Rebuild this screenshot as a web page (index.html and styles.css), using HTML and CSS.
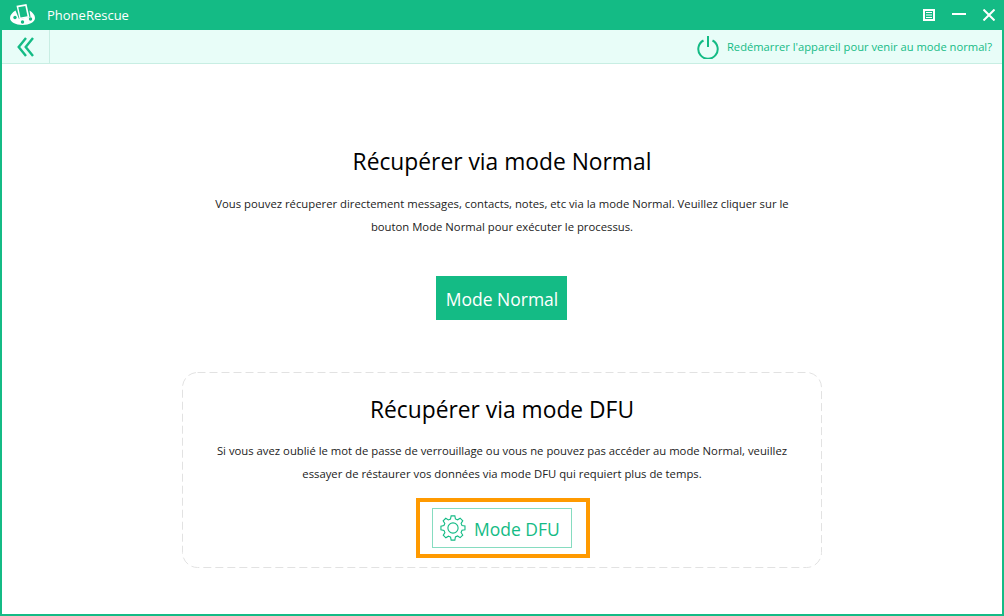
FILE: index.html
```html
<!DOCTYPE html>
<html lang="fr">

<head>
    <meta charset="UTF-8">
    <title>PhoneRescue</title>
    <link rel="stylesheet" href="styles.css">
</head>

<body>
    <div class="window">
        <header class="titlebar">
            <div class="brand">
                <svg class="logo" width="25" height="21" viewBox="0 0 25 21">
                    <path fill="#fff" d="M5.500 6.500C2.300 8.500 0 11 0 14c0 4 5.500 7 12.500 7S25 18 25 14c0-3-2.300-5.500-5.500-7.500l1 6.500-11.500 2z"/>
                    <path fill="#fff" d="M6.500 1.800 16.500 0l3 13.500-10 1.800z"/>
                    <path fill="#14bb85" d="M8.300 3.200 15.300 2l2.200 10.200-7 1.200z"/>
                    <circle cx="5" cy="13.500" r="1.700" fill="#14bb85"/>
                    <circle cx="12.500" cy="18" r="1.700" fill="#14bb85"/>
                    <circle cx="20.500" cy="15" r="1.700" fill="#14bb85"/>
                </svg>
                <span class="app-name">PhoneRescue</span>
            </div>
            <div class="win-controls">
                <svg width="12" height="12" viewBox="0 0 12 12">
                    <path fill="none" stroke="#fff" stroke-width="2" d="M1 1h10v10H1z"/>
                    <path stroke="#fff" d="M3 3.500h6M3 6h6M3 8.500h6"/>
                </svg>
                <svg width="14" height="12" viewBox="0 0 14 12">
                    <path stroke="#fff" stroke-width="2" d="M0 5h14"/>
                </svg>
                <svg width="12" height="12" viewBox="0 0 12 12">
                    <path stroke="#fff" stroke-width="2" d="M.5.500l11 11M11.500.500l-11 11"/>
                </svg>
            </div>
        </header>

        <nav class="toolbar">
            <div class="back">
                <svg width="17" height="20" viewBox="0 0 17 20">
                    <path fill="none" stroke="#14bb85" stroke-width="2.400" d="M9 1 1.700 10 9 19M16 1 8.700 10l7.300 9"/>
                </svg>
            </div>
            <div class="restart">
                <svg width="22" height="24" viewBox="0 0 22 24">
                    <path fill="none" stroke="#14bb85" stroke-width="2" d="M6.500 5.500a9.700 9.700 0 1 0 9 0"/>
                    <path stroke="#14bb85" stroke-width="2" d="M11 1v11"/>
                </svg>
                <span>Redémarrer l'appareil pour venir au mode normal?</span>
            </div>
        </nav>

        <main class="content">
            <section class="normal">
                <h1>Récupérer via mode Normal</h1>
                <p>Vous pouvez récuperer directement messages, contacts, notes, etc via la mode Normal. Veuillez cliquer sur le<br>bouton Mode Normal pour exécuter le processus.</p>
                <button class="btn-normal">Mode Normal</button>
            </section>

            <section class="dfu">
                <h2>Récupérer via mode DFU</h2>
                <p>Si vous avez oublié le mot de passe de verrouillage ou vous ne pouvez pas accéder au mode Normal, veuillez<br>essayer de réstaurer vos données via mode DFU qui requiert plus de temps.</p>
                <div class="highlight">
                    <button class="btn-dfu">
                        <svg width="26" height="26" viewBox="0 0 28 28">
                            <path fill="none" stroke="#14bb85" stroke-width="1.200" d="M12 1h4l.6 3.200 2.300 1 2.800-1.800 2.800 2.800-1.800 2.800 1 2.300 3.200.6v4l-3.200.6-1 2.300 1.800 2.800-2.800 2.800-2.800-1.800-2.300 1L16 27h-4l-.6-3.200-2.300-1-2.800 1.800-2.800-2.800 1.800-2.800-1-2.300L1 16v-4l3.200-.6 1-2.300-1.800-2.800 2.800-2.800 2.800 1.800 2.300-1z"/>
                            <circle cx="14" cy="14" r="5.500" fill="none" stroke="#14bb85" stroke-width="1.200"/>
                        </svg>
                        <span>Mode DFU</span>
                    </button>
                </div>
            </section>
        </main>
    </div>
</body>

</html>
```

FILE: styles.css
```css
* {
    box-sizing: border-box;
}

body {
    margin: 0;
    font-family: "Open Sans", "Noto Sans", sans-serif;
    background-color: #fff;
}

.window {
    width: 1004px;
    height: 616px;
    border: 2px solid #14bb85;
    border-top: none;
    display: flex;
    flex-direction: column;
}

.titlebar {
    height: 30px;
    margin: 0 -2px;
    padding: 0 9px 0 10px;
    background-color: #14bb85;
    display: flex;
    justify-content: space-between;
    align-items: center;
    color: #fff;
}

.brand {
    display: flex;
    align-items: center;
    gap: 12px;
}

.logo {
    display: block;
    margin-top: -2px;
}

.app-name {
    font-size: 13px;
}

.win-controls {
    display: flex;
    align-items: center;
    gap: 17px;
}

.win-controls svg {
    display: block;
}

.toolbar {
    height: 34px;
    background-color: #e8fdf8;
    border-bottom: 1px solid #c8eee3;
    display: flex;
    justify-content: space-between;
    align-items: center;
}

.back {
    width: 48px;
    height: 100%;
    border-right: 1px solid #c8eee3;
    display: flex;
    justify-content: center;
    align-items: center;
}

.restart {
    display: flex;
    align-items: center;
    gap: 8px;
    padding-right: 10px;
    font-size: 11.2px;
    color: #14bb85;
}

.content {
    flex: 1;
    display: flex;
    flex-direction: column;
    align-items: center;
    text-align: center;
}

h1,
h2 {
    margin: 0;
    font-size: 22.8px;
    font-weight: 400;
    line-height: 30px;
    color: #000;
}

p {
    margin: 0;
    font-size: 11.3px;
    line-height: 23px;
    color: #222;
}

.normal {
    padding-top: 83px;
}

.normal p {
    margin-top: 15px;
}

button {
    font-family: inherit;
    cursor: pointer;
}

.btn-normal {
    display: block;
    width: 131px;
    height: 44px;
    margin: 38px auto 0;
    padding: 1px 0 0;
    border: none;
    background-color: #14bb85;
    color: #fff;
    font-size: 17.500px;
}

.dfu {
    width: 640px;
    height: 196px;
    margin-top: 52px;
    padding-top: 23px;
    background-image: url("data:image/svg+xml,%3Csvg xmlns='http://www.w3.org/2000/svg' width='640' height='196'%3E%3Crect x='.5' y='.5' width='639' height='195' rx='15' fill='none' stroke='%23e2e2e2' stroke-dasharray='8 4'/%3E%3C/svg%3E");
    display: flex;
    flex-direction: column;
    align-items: center;
}

.dfu p {
    margin-top: 14px;
}

.highlight {
    width: 174px;
    height: 60px;
    margin: 13px 0 0 2px;
    padding-left: 12px;
    border: 4px solid #ff9a00;
    display: flex;
    align-items: center;
}

.btn-dfu {
    width: 140px;
    height: 40px;
    padding: 0 0 0 7px;
    border: 1px solid #86dcc0;
    background-color: #fff;
    color: #14bb85;
    font-size: 17.500px;
    display: flex;
    align-items: center;
    gap: 8px;
}

.btn-dfu span {
    padding-top: 1px;
}

.btn-dfu svg {
    display: block;
}
```
